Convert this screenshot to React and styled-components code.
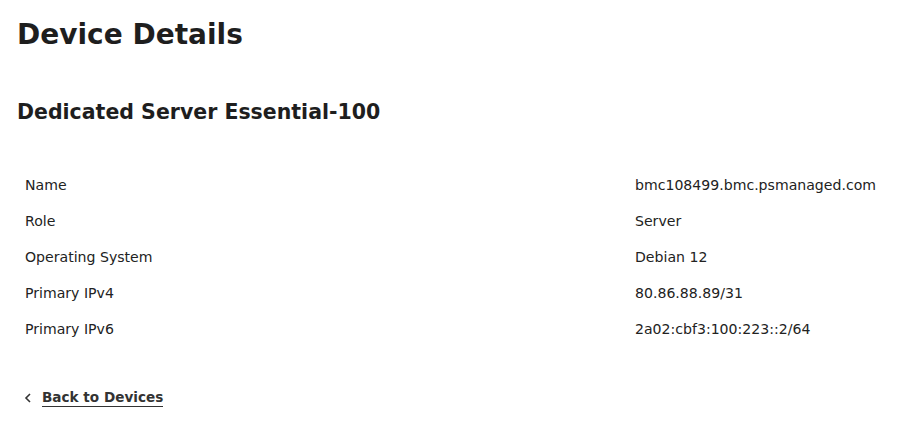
import React from "react";
import styled, { createGlobalStyle } from "styled-components";

const GlobalStyle = createGlobalStyle`
  body {
    margin: 0;
    background: #fff;
    font-family: "DejaVu Sans", "Liberation Sans", sans-serif;
    color: #222;
  }
`;

const Page = styled.div`
  padding: 16px 17px 0 17px;
`;

const Title = styled.h1`
  margin: 0;
  font-size: 28px;
  line-height: 38px;
  font-weight: 700;
  color: #1e1e1e;
`;

const Subtitle = styled.h2`
  margin: 44px 0 0 0;
  font-size: 20.5px;
  line-height: 28px;
  font-weight: 700;
  color: #1e1e1e;
`;

const Table = styled.div`
  margin-top: 41px;
  display: grid;
  grid-template-columns: 610px 1fr;
`;

const Cell = styled.div`
  padding: 0 8px;
  height: 36px;
  display: flex;
  align-items: center;
  font-size: 14.1px;
  color: #222;
`;

const BackLink = styled.a`
  display: flex;
  align-items: center;
  gap: 10px;
  margin: 42px 0 0 7px;
  font-size: 13.6px;
  font-weight: 700;
  color: #333;
  cursor: pointer;
`;

const LinkText = styled.span`
  display: inline-block;
  line-height: 16px;
  padding-bottom: 1px;
  border-bottom: 1.5px solid #333;
`;

const rows = [
  ["Name", "bmc108499.bmc.psmanaged.com"],
  ["Role", "Server"],
  ["Operating System", "Debian 12"],
  ["Primary IPv4", "80.86.88.89/31"],
  ["Primary IPv6", "2a02:cbf3:100:223::2/64"],
];

export default function App() {
  return (
    <>
      <GlobalStyle />
      <Page>
        <Title>Device Details</Title>
        <Subtitle>Dedicated Server Essential-100</Subtitle>
        <Table>
          {rows.map(([label, value]) => (
            <React.Fragment key={label}>
              <Cell>{label}</Cell>
              <Cell>{value}</Cell>
            </React.Fragment>
          ))}
        </Table>
        <BackLink>
          <svg width="8" height="10" viewBox="0 0 8 10" fill="none">
            <path d="M6 1L2 5l4 4" stroke="#333" strokeWidth="1.6" />
          </svg>
          <LinkText>Back to Devices</LinkText>
        </BackLink>
      </Page>
    </>
  );
}
